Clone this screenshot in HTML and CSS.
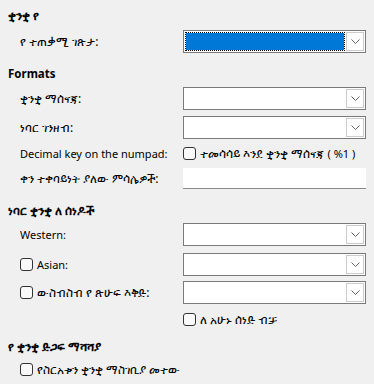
FILE: index.html
```html
<!DOCTYPE html>
<html lang="am">
<head>
<meta charset="utf-8">
<title>Languages</title>
<link rel="stylesheet" href="styles.css">
</head>
<body>
<div class="page">
  <div class="heading h1">ቋንቋ የ</div>
  <div class="row r1">
    <span class="label">የ ተጠቃሚ ገጽታ:</span>
    <div class="combo focused"><span class="value"></span><span class="btn"><svg width="9" height="5" viewBox="0 0 9 5"><path d="M0.5 0.5 L4.5 4.5 L8.5 0.5" fill="none" stroke="#666" stroke-width="1"/></svg></span></div>
  </div>

  <div class="heading h2"><span class="lat">Formats</span></div>
  <div class="row r2">
    <span class="label">ቋንቋ ማሰናጃ:</span>
    <div class="combo"><span class="value"></span><span class="btn"><svg width="9" height="5" viewBox="0 0 9 5"><path d="M0.5 0.5 L4.5 4.5 L8.5 0.5" fill="none" stroke="#666" stroke-width="1"/></svg></span></div>
  </div>
  <div class="row r3">
    <span class="label">ነባር ገንዘብ:</span>
    <div class="combo"><span class="value"></span><span class="btn"><svg width="9" height="5" viewBox="0 0 9 5"><path d="M0.5 0.5 L4.5 4.5 L8.5 0.5" fill="none" stroke="#666" stroke-width="1"/></svg></span></div>
  </div>
  <div class="row r4">
    <span class="label lat">Decimal key on the numpad:</span>
    <label class="check"><span class="box"></span><span>ተመሳሳይ እንደ ቋንቋ ማሰናጃ <span class="lat">( %1 )</span></span></label>
  </div>
  <div class="row r5">
    <span class="label">ቀን ተቀባይነት ያለው ምሳሌዎች:</span>
    <div class="entry"></div>
  </div>

  <div class="heading h3">ነባር ቋንቋ ለ ሰነዶች</div>
  <div class="row r6">
    <span class="label lat">Western:</span>
    <div class="combo"><span class="value"></span><span class="btn"><svg width="9" height="5" viewBox="0 0 9 5"><path d="M0.5 0.5 L4.5 4.5 L8.5 0.5" fill="none" stroke="#666" stroke-width="1"/></svg></span></div>
  </div>
  <div class="row r7">
    <label class="check"><span class="box"></span><span class="lat">Asian:</span></label>
    <div class="combo"><span class="value"></span><span class="btn"><svg width="9" height="5" viewBox="0 0 9 5"><path d="M0.5 0.5 L4.5 4.5 L8.5 0.5" fill="none" stroke="#666" stroke-width="1"/></svg></span></div>
  </div>
  <div class="row r8">
    <label class="check"><span class="box"></span><span>ውስብስብ የ ጽሁፍ እቅድ:</span></label>
    <div class="combo"><span class="value"></span><span class="btn"><svg width="9" height="5" viewBox="0 0 9 5"><path d="M0.5 0.5 L4.5 4.5 L8.5 0.5" fill="none" stroke="#666" stroke-width="1"/></svg></span></div>
  </div>
  <div class="row r9">
    <span class="label"></span>
    <label class="check"><span class="box"></span><span>ለ አሁኑ ሰነድ ብቻ</span></label>
  </div>

  <div class="heading h4">የ ቋንቋ ድጋፍ ማሻሻያ</div>
  <div class="row r10 single">
    <label class="check"><span class="box"></span><span>የስርአቱን ቋንቋ ማስገቢያ መተው</span></label>
  </div>
</div>
</body>
</html>
```

FILE: styles.css
```css
html, body {
  margin: 0;
  padding: 0;
  background: #f0f0f0;
}
body {
  font-family: "Noto Sans", "Open Sans", "DejaVu Sans", sans-serif;
  font-size: 12px;
  color: #000;
  width: 374px;
  height: 384px;
  overflow: hidden;
}
.lat {
  font-size: 11px;
}
.page {
  padding: 8px 8px 0 8px;
}
.heading {
  font-weight: bold;
  height: 16px;
  line-height: 16px;
  white-space: nowrap;
}
.heading .lat {
  font-size: 11.5px;
}
.row {
  display: grid;
  grid-template-columns: 163px 183px;
  align-items: center;
  padding-left: 12px;
  height: 23px;
}
.row.single {
  grid-template-columns: 1fr;
}
.label {
  white-space: nowrap;
  line-height: 16px;
}
.combo {
  box-sizing: border-box;
  height: 23px;
  border: 1px solid #7a7a7a;
  background: #fff;
  display: flex;
}
.combo .value {
  flex: 1;
}
.combo.focused .value {
  margin: 1px 0 1px 1px;
  border: 1px dotted #000;
  background: #0078d7;
  background-clip: padding-box;
}
.combo .btn {
  box-sizing: border-box;
  width: 18px;
  margin: 1px;
  border: 1px solid #cccccc;
  display: flex;
  align-items: center;
  justify-content: center;
}
.check {
  display: flex;
  align-items: center;
  gap: 4px;
  white-space: nowrap;
}
.box {
  box-sizing: border-box;
  width: 13px;
  height: 13px;
  border: 1px solid #333;
  border-radius: 3px;
  background: #fafafa;
  flex: none;
}
.entry {
  box-sizing: border-box;
  height: 21px;
  background: #fff;
  border-bottom: 1px solid #8a8a8a;
}

.r1 { margin-top: 6px; }
.h2 { margin-top: 13px; }
.r2 { margin-top: 5px; }
.r3 { margin-top: 6px; }
.r4 { margin-top: 6px; height: 15px; }
.r5 { margin-top: 8px; height: 21px; }
.h3 { margin-top: 14px; }
.r6 { margin-top: 4px; }
.r7 { margin-top: 7px; }
.r8 { margin-top: 5px; }
.r9 { margin-top: 7px; height: 15px; }
.h4 { margin-top: 13px; }
.r10 { margin-top: 6px; height: 15px; }
```
